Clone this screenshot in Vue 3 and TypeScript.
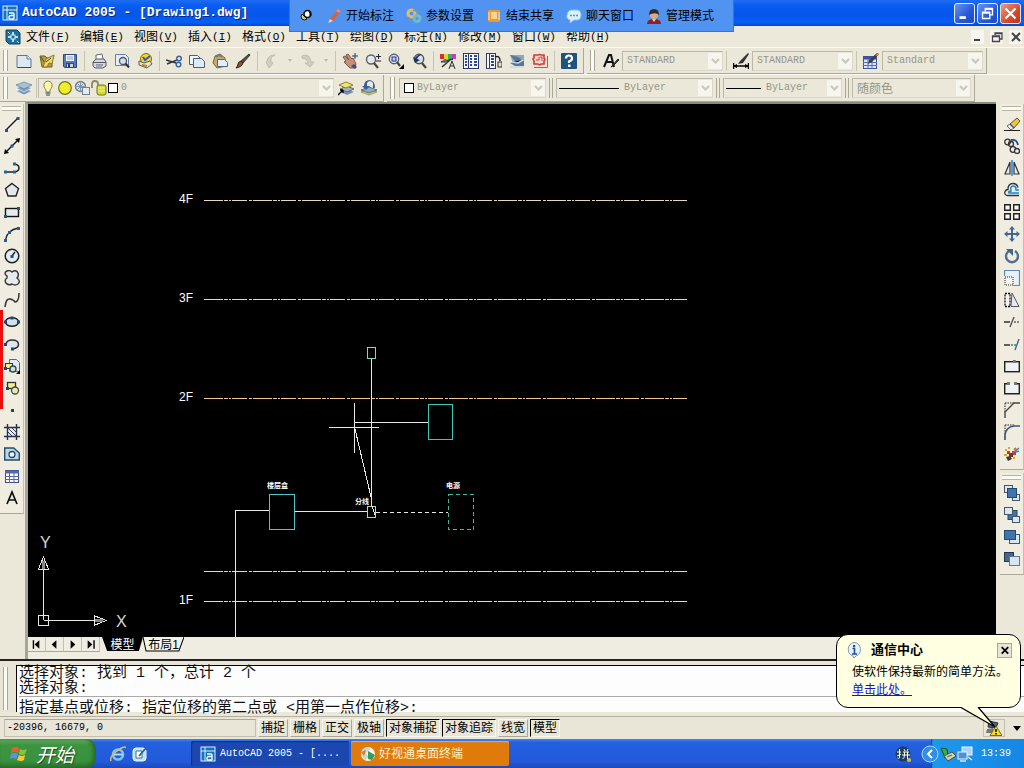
<script setup lang="ts">
import { ref } from 'vue'

type Item = { id: string; label: string }

const icons: Record<string, string> = {
  app: '<rect x="1" y="1" width="14" height="14" fill="#1573b8" stroke="#d8f0ff"/><path d="M1 5h14M5 1v14" stroke="#d8f0ff"/><path d="M7 8h4q1 0 1 1v5M12 10.500H9q-2 0-2 2t2 1.500h3" fill="none" stroke="#fff" stroke-width="1.300"/>',
  dwg: '<path d="M1 1h11l3 3v11H4l-3-3z" fill="#1c6f9f" stroke="#0c4468"/><path d="M8 3v10M3 8h10" stroke="#fff" stroke-width="1.500"/><rect x="6" y="6" width="4" height="4" fill="#1c6f9f" stroke="#c9efff"/><path d="M3 3l2 2M12 12l2 2" stroke="#bff"/>',
  new: '<path d="M1 2.500h10l4 3.500v8.500H1z" fill="#dce9f4" stroke="#5e7690"/><path d="M11 2.500V6h4" fill="#fff" stroke="#5e7690"/><path d="M2 14.500h13" stroke="#34485e"/>',
  open: '<path d="M1 3h5l2 2h5v9H3z" fill="#b99c3c" stroke="#6d5b22"/><path d="M4 14l3-8 8-4-2 9-3-1-2 4z" fill="#f0d76c" stroke="#8c7428"/><path d="M2 4l3 5M7 9l5-4" stroke="#45521b"/>',
  save: '<path d="M1.500 1.500h13v13h-12l-1-1z" fill="#5779b4" stroke="#2f4a80"/><rect x="4" y="2" width="8" height="6" fill="#eef3fa"/><path d="M5 4h6M5 6h6" stroke="#8ea3c4"/><rect x="4.500" y="10.500" width="7" height="4" fill="#c8d4e8" stroke="#2f4a80"/><rect x="6" y="11" width="2" height="3" fill="#243b68"/>',
  print: '<path d="M5 7V2l6-1 1 5" fill="#fff" stroke="#667"/><path d="M2 9l3-3h8l2 3v4l-3 2H4l-2-2z" fill="#d5d8dc" stroke="#555b66"/><path d="M2 9.500h13M5 12h7" stroke="#555b66"/><rect x="5" y="12" width="6" height="2" fill="#93a7cf"/>',
  preview: '<path d="M1.500 1.500h10l3 3v8h-13z" fill="#e7eefb" stroke="#6b7fae"/><circle cx="9" cy="8" r="3.500" fill="#d4e1f2" stroke="#4f5660" stroke-width="1.300"/><path d="M11.500 10.500l3.500 4" stroke="#333" stroke-width="2"/>',
  publish: '<circle cx="9" cy="6" r="5.500" fill="#f0d338" stroke="#806d16"/><path d="M6 4l2 3 5-4" stroke="#335fa9" stroke-width="2" fill="none"/><path d="M2 8l5 2 6-2 2 3-5 4-8-3z" fill="#e5e2d8" stroke="#5b5a52"/><path d="M5 12l5 1" stroke="#b09117" stroke-width="2"/>',
  cut: '<path d="M0 7l10 3M1 11l10-4" stroke="#30353b" stroke-width="1.500"/><circle cx="13" cy="5.500" r="2.300" fill="none" stroke="#3c659b" stroke-width="1.500"/><circle cx="12.500" cy="11.500" r="2.300" fill="none" stroke="#3c659b" stroke-width="1.500"/>',
  copy: '<path d="M.5 2.500h8l3 3v6H.5z" fill="#edf6fb" stroke="#4b5f73"/><path d="M4.500 5.500h8l3 3v6h-11z" fill="#dcebf5" stroke="#4b5f73"/>',
  paste: '<path d="M3 3l5-2 5 4 1 8-9 2-4-5z" fill="#c1ab70" stroke="#80662e"/><path d="M4 4l3-2 3 2" stroke="#778" fill="none" stroke-width="2"/><path d="M5.500 6.500h7l3 3v4h-10z" fill="#e2eff8" stroke="#4b6a85"/>',
  match: '<path d="M14 1l1 1-7 8-2-2z" fill="#55504a" stroke="#37322d"/><path d="M6 8l2 2q-1 4-7 5 2-2 2-4t3-3z" fill="#8a5236" stroke="#30221a"/>',
  undo: '<path d="M3 8q1-6 8-6-5 2-4 7l2 1-4 5-3-6z" fill="#d2cebf" stroke="#c0bcad"/>',
  redo: '<path d="M2 3q8-3 9 6h3l-4 5-5-4h3q0-4-6-5z" fill="#d2cebf" stroke="#c0bcad"/>',
  pan: '<path d="M1 4l2-1 4 4-3-5 2-1 4 5 1-1 3 6-1 4-5 0-6-6 2-1z" fill="#c98f7b" stroke="#7c5345"/><path d="M9 13l3-2 3 3-2 2z" fill="#3d4f8a"/><path d="M13 0v6M10 3h6" stroke="#213767"/>',
  zoomrt: '<circle cx="6" cy="6.500" r="4.500" fill="#e4e9e9" stroke="#5a6068" stroke-width="1.400"/><path d="M9 10l4 5" stroke="#4b4740" stroke-width="2.200"/><path d="M11 3.500h5M13.500 1v5M11 8h5" stroke="#223"/>',
  zoomwin: '<circle cx="6" cy="6" r="4.700" fill="#e4e9f2" stroke="#5a6068" stroke-width="1.400"/><rect x="4" y="4" width="4" height="4" fill="#bfc9ff" stroke="#28309a"/><path d="M9 9l3 4" stroke="#4b4740" stroke-width="2.200"/><path d="M16 11v5h-5z" fill="#000"/>',
  zoomprev: '<circle cx="8" cy="6" r="4.700" fill="#d7e1ea" stroke="#4a5361" stroke-width="1.400"/><path d="M11 10l4 5" stroke="#4b4740" stroke-width="2.200"/><path d="M14 3Q9 0 6 6l3 1-5 3-2-6 2 1q4-6 10-2" fill="#1d3465"/>',
  props: '<rect x="0" y="1" width="4" height="5" fill="#d62d2d"/><rect x="4" y="1" width="4" height="5" fill="#e4d333"/><rect x="8" y="1" width="4" height="5" fill="#32b541"/><rect x="12" y="1" width="4" height="5" fill="#ca39ca"/><path d="M1 9l12-3M2 14l8-7" stroke="#333" stroke-width="1.500"/><path d="M9 16l3-8 3 8M10 13h4" stroke="#29313b" fill="none"/><circle cx="5" cy="8" r="2" fill="#666"/>',
  center: '<rect x=".5" y=".5" width="15" height="15" fill="#f5f7ff" stroke="#2b3a68"/><path d="M5.500 0v16" stroke="#2b3a68"/><path d="M2 3h2M2 6h2M2 9h2M2 12h2M7 3h2M11 3h3M7 6h2M11 6h3M7 9h2M11 9h3M7 12h2M11 12h3" stroke="#31478c" stroke-width="2"/>',
  palette: '<rect x=".5" y=".5" width="9" height="15" fill="#f5f7ff" stroke="#2b3a68"/><path d="M3.500 0v16" stroke="#2b3a68"/><path d="M5 3h3M5 6h3M5 9h3M5 12h3" stroke="#31478c" stroke-width="2"/><path d="M9 4q5-2 5 4" fill="none" stroke="#222" stroke-width="1.500"/><rect x="12" y="9" width="4" height="5" fill="#ddd" stroke="#333"/>',
  sheet: '<path d="M1 2h14v5l-5 3H4z" fill="#8ca6bf"/><path d="M1 2l8 2 6 4v5H6l-5-3 6-1z" fill="#54779b"/><path d="M3 9l6 1 5-3M1 14h14" stroke="#cad9e4" stroke-width="1.500"/>',
  markup: '<path d="M2 14.500h13.500V3" fill="none" stroke="#777"/><path d="M2 2h4q2-1 3 0h3v3q2 2 0 3v3H9q-2 2-3 0H2V8Q0 6 2 5z" fill="#f7d7cd" stroke="#d33932" stroke-width="1.600"/><path d="M7 4v3H4M8 4h2v4" stroke="#d33932" fill="none"/>',
  help: '<rect x="0" y="0" width="16" height="16" rx="1" fill="#1f537e"/><path d="M5 5.500q0-3 3-3t3 3q0 2-3 3v1.500" fill="none" stroke="#fff" stroke-width="2.200"/><rect x="7" y="11.500" width="2.500" height="2.500" fill="#fff"/>',
  tstyle: '<path d="M1 14L6 2h2l3 12M3 9h6" fill="none" stroke="#111" stroke-width="2"/><path d="M15 6l1 1-6 6-2 1z" fill="#555" stroke="#222"/>',
  dstyle: '<path d="M0 13h16M.5 10v6M15.500 10v6" stroke="#000" stroke-width="1.500"/><path d="M0 13l4-2v4zM16 13l-4-2v4z"/><path d="M15 0l1 1-6 9-5 1 2-3z" fill="#333"/>',
  tbstyle: '<rect x=".5" y="3.500" width="13" height="12" fill="#dbe3ff" stroke="#3e539c"/><path d="M0 5h14" stroke="#3e539c" stroke-width="3"/><path d="M5 6v10M9 6v10M0 9.500h14M0 12.500h14" stroke="#5a70bb"/><path d="M14 0l2 1-7 8-4 2 1-4z" fill="#38414c"/><path d="M12 3l3-3 1 2z" fill="#e19b27"/>',
  layers: '<path d="M0 11l8-3 8 3-8 4z" fill="#7893b1" stroke="#fff" stroke-width=".6"/><path d="M0 8l8-3 8 3-8 4z" fill="#7fa0bd" stroke="#fff" stroke-width=".6"/><path d="M0 5l8-3 8 3-8 4z" fill="#a8c3d8" stroke="#54718e" stroke-width=".6"/>',
  bulb: '<path d="M6 10q-3-3-2-6 1-3 4-3 3 0 4 3 1 3-2 6v2H6z" fill="#fff9b0" stroke="#8c8550"/><path d="M5.500 13h5M6 15h4" stroke="#677" stroke-width="1.500"/>',
  sun: '<circle cx="8" cy="8" r="6.300" fill="#f1ee27" stroke="#737522" stroke-width="1.200"/>',
  freeze: '<circle cx="6.500" cy="6.500" r="5" fill="#d2e0e8" stroke="#6c8294" stroke-width="1.400"/><path d="M6.500 1v11M1 6.500h11M3 3l7 7M10 3l-7 7" stroke="#8098aa"/><rect x="8.500" y="7.500" width="7" height="7" fill="#e4eaf0" stroke="#6c8294"/>',
  lock: '<path d="M1 8V4q0-3 3-3t3 3v3" fill="none" stroke="#8b8b60" stroke-width="1.800"/><rect x="6" y="5" width="9" height="10" rx="2" fill="#d3d92d" stroke="#6f771c"/><path d="M7 8h7M7 11h7" stroke="#f4f69d"/>',
  mklayer: '<path d="M2 12l7-3 7 3-7 3z" fill="#7995ae"/><path d="M2 9l7-3 7 3-7 3z" fill="#9db4c4" stroke="#667"/><path d="M1 5l7-3 7 3-7 3z" fill="#f0e86d" stroke="#8b8435"/><path d="M0 15l5-5M5 10v3M5 10H2" stroke="#000" stroke-width="1.300"/>',
  prevlayer: '<path d="M0 12l8-3 8 3-8 3z" fill="#e0d86b" stroke="#997"/><path d="M0 10l8-3 8 3-8 3z" fill="#8eabc8" stroke="#577"/><path d="M12 8V3q-3-4-6 0v3h3L5 10 1 6h2q0-6 6-6 5 1 5 8z" fill="#3b5f9a"/>',
  line: '<path d="M2 14L14 2" stroke="#111" stroke-width="1.300"/><path d="M1 13h3v3H1zM12.500 1h3v3h-3z" fill="#245482"/>',
  xline: '<path d="M2 14L14 2" stroke="#111" stroke-width="1.500"/><path d="M0 16l1-5 4 4zM16 0l-1 5-4-4z"/><rect x="6.500" y="6.500" width="3" height="3" fill="#245c96"/>',
  pline: '<path d="M2 12h9q4-1 4-4t-4-4" fill="none" stroke="#222" stroke-width="1.500"/><path d="M0 10.500h3v3H0zM9 10.500h3v3H9zM9 2.500h3v3H9z" fill="#1c67a8"/>',
  polygon: '<path d="M8 1.500l6.500 5-2.500 7.500H4L1.500 6.500z" fill="#e3e8ec" stroke="#222" stroke-width="1.400"/>',
  rect: '<rect x="1.500" y="4.500" width="13" height="8" fill="#e4ebef" stroke="#111" stroke-width="1.400"/><path d="M0 11h3v3H0zM13 3h3v3h-3z" fill="#245482"/>',
  arc: '<path d="M1.500 14Q3 4 14.500 2" fill="none" stroke="#222" stroke-width="1.500"/><path d="M0 13h3v3H0zM4 5h3v3H4zM13 1h3v3h-3z" fill="#1e5fa2"/>',
  circle: '<circle cx="8" cy="8" r="6.800" fill="#dfecf6" stroke="#222" stroke-width="1.500"/><path d="M8 8l3-4" stroke="#222" stroke-width="1.400"/><rect x="6.500" y="7" width="3" height="3" fill="#1e4f82"/>',
  cloud: '<path d="M3 6Q-1 3 3 1q3-1 5 1 4-3 6 1 1 3-1 5 4 3 1 6-3 2-6 0-4 2-6-1-2-3 1-5z" fill="#e7ebee" stroke="#333" stroke-width="1.400"/>',
  spline: '<path d="M1 15Q2 6 6 7t5 3q4 0 4-9" fill="none" stroke="#333" stroke-width="1.500"/>',
  ellipse: '<ellipse cx="8" cy="8" rx="6.500" ry="4.300" fill="#cfe1ec" stroke="#222" stroke-width="1.500"/><path d="M0 6.500h3v3H0zM13 6.500h3v3h-3zM6.500 2.500h3v3h-3z" fill="#14497f"/>',
  earc: '<path d="M2 8Q3 4 8 4q6 0 6.500 4t-6 5" fill="#dde8ef" stroke="#333" stroke-width="1.500"/><path d="M0 7h3v3H0zM7 11.500h3v3H7z" fill="#14497f"/>',
  insblk: '<path d="M5.500 1.500h7l3 3v9h-10z" fill="#dfe9f1" stroke="#56687c"/><rect x="1.500" y="5.500" width="7" height="5" fill="#f4f08b" stroke="#333"/><circle cx="9" cy="11" r="3" fill="#d4e6c0" stroke="#224a6b" stroke-width="1.300"/><path d="M0 9h3v3H0z" fill="#14497f"/><path d="M16 12v4h-4z"/>',
  mkblk: '<rect x="3.500" y="2.500" width="8" height="6" fill="#f4f08b" stroke="#333" stroke-width="1.300"/><circle cx="11" cy="10.500" r="3.500" fill="#e3edb0" stroke="#444" stroke-width="1.300"/><path d="M2 7h3v3H2z" fill="#14497f"/>',
  point: '<rect x="7" y="7" width="3" height="3" fill="#174f2f"/>',
  hatch: '<rect x="3" y="3" width="10" height="10" fill="#eef"/><path d="M3.500 0v16M12.500 0v16M0 3.500h16M0 12.500h16" stroke="#234" stroke-width="1.400"/><path d="M4 8l5 5M4 4l9 9M8 4l5 5" stroke="#335"/>',
  region: '<path d="M.7 2h9l5.600 5v7H.7z" fill="#b9d9ea" stroke="#274b66" stroke-width="1.400"/><circle cx="8" cy="8.500" r="3" fill="#edf6fb" stroke="#274b66" stroke-width="1.300"/>',
  table: '<rect x="1.500" y="2.500" width="13" height="12" fill="#fff" stroke="#3d4c86"/><path d="M1 4h14" stroke="#5668a8" stroke-width="3"/><path d="M5.500 5v10M10 5v10M1 8.500h14M1 11.500h14" stroke="#5668a8"/>',
  mtext: '<path d="M3 14L8 2l5 12M4.800 10h6.400" fill="none" stroke="#111" stroke-width="1.700"/>',
  erase: '<path d="M0 14.500h16" stroke="#222"/><path d="M3 10l4 4 3-2-4-4z" fill="#f2e9e9" stroke="#8b5a5a"/><path d="M6 8l7-6 3 3-6 7z" fill="#eec646" stroke="#6c5414"/><path d="M6 8l4 4" stroke="#3a5a8a" stroke-width="1.500"/>',
  mcopy: '<circle cx="3.500" cy="4" r="2.800" fill="none" stroke="#333" stroke-width="1.300"/><circle cx="7" cy="6" r="2.500" fill="none" stroke="#333" stroke-width="1.300"/><circle cx="9" cy="11.500" r="2.800" fill="#eee" stroke="#333" stroke-width="1.300"/><circle cx="13" cy="13" r="2.500" fill="#eee" stroke="#333" stroke-width="1.300"/><path d="M7 2q6-1 7 5" fill="none" stroke="#1c4b88" stroke-width="1.800"/>',
  mirror: '<path d="M6 2v12H1zM10 2v12h5z" fill="#e5ebee" stroke="#333" stroke-width="1.200"/><path d="M8 0v16" stroke="#1787d3" stroke-width="1.500"/>',
  offset: '<path d="M15 13.500H3q-3-1-2-4 1-2 3-2 0-6 5-6 4 0 5 4" fill="none" stroke="#333" stroke-width="1.300"/><path d="M15 11H5q-1-2 2-2-1-5 2-5 3 0 3 3v1h3" fill="none" stroke="#1787d3" stroke-width="1.500"/>',
  array: '<path d="M.7.7h5.600v5.600H.7zM9.700.7h5.600v5.600H9.700zM.7 9.700h5.600v5.600H.7zM9.700 9.700h5.600v5.600H9.700z" fill="#f5f5f2" stroke="#222" stroke-width="1.400"/>',
  move: '<path d="M8 0l3 3.500H9V7h3.500V5L16 8l-3.500 3V9H9v3.500h2L8 16l-3-3.500h2V9H3.500v2L0 8l3.500-3v2H7V3.500H5z" fill="#3f6694"/>',
  rotate: '<path d="M11 3a6 6 0 1 1-6 0" fill="none" stroke="#52708e" stroke-width="2.400"/><path d="M2 1h7v7z" fill="#44658a"/>',
  scale: '<path d="M.5 6V.5h15v15H9" fill="#e7f0f6" stroke="#5b88b0" stroke-width="1.200"/><rect x="1" y="7" width="8" height="8" fill="#f4f4f0" stroke="#222" stroke-dasharray="1 1"/>',
  stretch: '<path d="M1 1.500h5v13H1z" fill="#f4f4f0" stroke="#111" stroke-dasharray="2 1" stroke-width="1.300"/><path d="M8 1l7 13.500H7z" fill="#e4eaf0" stroke="#556"/>',
  trim: '<path d="M0 8h6" stroke="#222" stroke-width="1.400"/><path d="M10 8h6" stroke="#222" stroke-dasharray="2 1"/><path d="M6 13l4-10" stroke="#555" stroke-width="1.400"/>',
  extend: '<path d="M0 9h6" stroke="#222" stroke-width="1.400"/><path d="M7 9h5" stroke="#298585" stroke-dasharray="2 1" stroke-width="1.400"/><path d="M11 14l4-11" stroke="#46658b" stroke-width="1.400"/>',
  breakpt: '<rect x=".7" y="3.700" width="14.600" height="10" fill="#eef2f4" stroke="#222" stroke-width="1.400"/><rect x="9" y="2" width="3" height="3" fill="#777"/>',
  break: '<path d="M4 3.700H.7v10h14.600v-10H12" fill="#eef2f4" stroke="#222" stroke-width="1.400"/><path d="M3 2h3v3H3zM10 2h3v3h-3z" fill="#777"/>',
  chamfer: '<path d="M1 1h9M1 1v9" stroke="#222" stroke-dasharray="1.500 1"/><path d="M1 16v-6l9-9h6" fill="none" stroke="#444" stroke-width="1.400"/>',
  fillet: '<path d="M1 1h9M1 1v9" stroke="#222" stroke-dasharray="1.500 1"/><path d="M1 16v-5Q2 3 10 2h6" fill="none" stroke="#3b5878" stroke-width="1.700"/>',
  explode: '<path d="M1 3h2v2H1zM4 1h2v2H4zM0 8h3v2H0zM9 11h2v2H9z" fill="#e0a52a"/><path d="M3 5h3v3H3zM8 5h4v4H8z" fill="#c73b25"/><path d="M5 7h4v4H5z" fill="#8a2d20"/><path d="M2 11l4-1 2 3-4 2z" fill="#4a3b30"/><path d="M9 7l6-5M12 6l3-1" stroke="#5182b6" stroke-width="1.500"/><path d="M10 4l2-2" stroke="#e7622e" stroke-width="2"/>',
  order1: '<rect x=".5" y=".5" width="8" height="7" fill="#dce7f0" stroke="#456"/><rect x="8.500" y="9.500" width="7" height="6" fill="#dce7f0" stroke="#456"/><rect x="3.500" y="3.500" width="9" height="9" fill="#3f74ac" stroke="#23486f"/>',
  order2: '<rect x="4" y="3.500" width="9" height="9" fill="#3f74ac" stroke="#23486f"/><rect x=".5" y=".5" width="8" height="7" fill="#dce7f0" stroke="#456"/><rect x="8.500" y="9.500" width="7" height="6" fill="#dce7f0" stroke="#456"/>',
  order3: '<rect x="5.500" y="5.500" width="10" height="9" fill="#d7e6f2" stroke="#456"/><rect x=".5" y="1.500" width="11" height="9" fill="#3f74ac" stroke="#23486f"/>',
  order4: '<rect x=".5" y="1.500" width="9" height="9" fill="#46668b" stroke="#23364f"/><rect x="5.500" y="5.500" width="10" height="9" fill="#d7e6f2" stroke="#678"/>',
  pin: '<path d="M4 6l5 5q-3 2-5 0t0-5z" fill="#d9d46a" stroke="#111"/><ellipse cx="9.500" cy="6" rx="3.500" ry="3.500" fill="#fff" stroke="#111" stroke-width="1.600"/><path d="M11 3q2 2 1 5" stroke="#111" stroke-width="1.500" fill="none"/>',
  pencil: '<path d="M12 1l3 2-8 10-3-2z" fill="#d9603d"/><path d="M4 11l3 2-5 2z" fill="#efd5a6"/><path d="M12 1l3 2-2 2-3-2z" fill="#e68c7a"/>',
  params: '<circle cx="5.500" cy="5.500" r="3.500" fill="none" stroke="#e6bd56" stroke-width="3"/><circle cx="11" cy="10.500" r="3" fill="none" stroke="#6fbad0" stroke-width="3"/><path d="M7 2l6 2M2 9l4 4" stroke="#7c95a2" stroke-width="1.500"/>',
  share: '<rect x="2" y="2" width="12" height="12" rx="1" fill="#ee9a2b"/><rect x="5" y="4" width="6" height="7" fill="#f6d59d"/><path d="M3 4v8M13 4v8" stroke="#fce8c7"/>',
  chat: '<path d="M2 4q1-2 4-2h5q4 0 4 5t-4 5H8l-4 3v-3Q0 11 1 7z" fill="#d9f1ff" stroke="#81c3f1"/><path d="M4 7.500h2M7 7.500h2M10 7.500h2" stroke="#4797d6" stroke-width="1.500"/>',
  user: '<path d="M1 16q0-5 7-5t7 5z" fill="#8d2130"/><circle cx="8" cy="7" r="4" fill="#dfaa7b"/><path d="M3 7Q3 1 8 1t5 6q-3-3-8-1z" fill="#302a2a"/><path d="M6 11h4l-2 3z" fill="#f4cc9f"/>',
  ie: '<circle cx="8" cy="8.500" r="5" fill="none" stroke="#7cc3fa" stroke-width="2.600"/><path d="M4 8.500h9" stroke="#a8d9ff" stroke-width="2"/><path d="M1 15Q-1 11 7 5t9-3" fill="none" stroke="#e0bd58" stroke-width="1.500"/>',
  desk: '<rect x="1" y="2" width="13" height="13" rx="3" fill="#bfe3f5" stroke="#e9f8ff"/><path d="M4 5h6v7H4z" fill="#fff" stroke="#35739f"/><path d="M7 10l7-8" stroke="#2b6290" stroke-width="1.800"/>',
  globe: '<circle cx="8" cy="8" r="7" fill="#f3f7ef"/><path d="M2 4q4-4 9-2L6 7l3 4-4 3q-4-3-3-10z" fill="#c9d9d2"/><path d="M8 5l7 4-3 5-4-1z" fill="#3a9c55"/><path d="M1 6l5-2-2 6z" fill="#e27a2c"/>',
  ime: '<circle cx="8" cy="8" r="7.500" fill="#1d3d58"/><path d="M4.500 3v9q-1 1-2 0M2 6h4M2 10l4-2M9 3l1 2M13 3l-1 2M8 6h6M7 9h8M9.500 6v3q0 3-2 4M12.500 6v7" fill="none" stroke="#fff"/><circle cx="14" cy="14" r="2" fill="#d7c03c"/>',
  tray1: '<path d="M1 2l6 1 1 7-3 2z" fill="#37af46" stroke="#104c26"/><path d="M4 10l8-4 4 4-8 5z" fill="#d5d3b0" stroke="#4d4e3a"/><path d="M7 11l5-2" stroke="#555"/>',
  tray2: '<rect x="5" y="1" width="10" height="8" fill="#a9d4f7" stroke="#e9f6ff"/><rect x="1" y="6" width="9" height="7" fill="#4e8fd8" stroke="#e9f6ff"/><path d="M3 15h6M11 11l4 3" stroke="#d9e5f0" stroke-width="1.500"/>',
  comm: '<path d="M3 1l9 2-2 5-8-1z" fill="#49688f" stroke="#233"/><path d="M1 9l6-1v5H0z" fill="#777"/><path d="M10 6l6 9.500H4z" fill="#f5d92d" stroke="#7d6b10"/><path d="M10 9v3M10 13v1.500" stroke="#000" stroke-width="1.500"/>',
  info: '<path d="M8 .5a7 7 0 0 1 2 13.500l-2 2-1-2A7 7 0 0 1 8 .5z" fill="#eaf2fb" stroke="#8398b5"/><path d="M6.500 6.500H8.500V12M6 12h5" fill="none" stroke="#1b4ea7" stroke-width="1.600"/><rect x="7" y="3" width="2.200" height="2.200" fill="#1b4ea7"/>',
}

const stdGroups: Item[][] = [
  [{ id: 'new', label: '新建' }, { id: 'open', label: '打开' }, { id: 'save', label: '保存' }],
  [{ id: 'print', label: '打印' }, { id: 'preview', label: '打印预览' }, { id: 'publish', label: '发布' }],
  [{ id: 'cut', label: '剪切' }, { id: 'copy', label: '复制' }, { id: 'paste', label: '粘贴' }, { id: 'match', label: '特性匹配' }],
  [{ id: 'undo', label: '放弃' }, { id: 'redo', label: '重做' }],
  [{ id: 'pan', label: '实时平移' }, { id: 'zoomrt', label: '实时缩放' }, { id: 'zoomwin', label: '窗口缩放' }, { id: 'zoomprev', label: '缩放上一个' }],
  [{ id: 'props', label: '特性' }, { id: 'center', label: '设计中心' }, { id: 'palette', label: '工具选项板' }, { id: 'sheet', label: '图纸集管理器' }, { id: 'markup', label: '标记集管理器' }],
  [{ id: 'help', label: '帮助' }],
]

const styleBoxes = [
  { id: 'tstyle', label: '文字样式', value: 'STANDARD' },
  { id: 'dstyle', label: '标注样式', value: 'STANDARD' },
  { id: 'tbstyle', label: '表格样式', value: 'Standard' },
]

const menus = [
  ['文件', 'F'], ['编辑', 'E'], ['视图', 'V'], ['插入', 'I'], ['格式', 'O'], ['工具', 'T'],
  ['绘图', 'D'], ['标注', 'N'], ['修改', 'M'], ['窗口', 'W'], ['帮助', 'H'],
]

const share: Item[] = [
  { id: 'pencil', label: '开始标注' }, { id: 'params', label: '参数设置' }, { id: 'share', label: '结束共享' },
  { id: 'chat', label: '聊天窗口' }, { id: 'user', label: '管理模式' },
]

const drawTools = ['line', 'xline', 'pline', 'polygon', 'rect', 'arc', 'circle', 'cloud', 'spline', 'ellipse', 'earc', 'insblk', 'mkblk', 'point', 'hatch', 'region', 'table', 'mtext']
const editTools = ['erase', 'mcopy', 'mirror', 'offset', 'array', 'move', 'rotate', 'scale', 'stretch', 'trim', 'extend', 'breakpt', 'break', 'chamfer', 'fillet', 'explode']
const orderTools = ['order1', 'order2', 'order3', 'order4']

const floors = [
  { y: 96, name: '4F' }, { y: 195, name: '3F' }, { y: 294, name: '2F' }, { y: 467, name: '' }, { y: 497, name: '1F' },
]

const toggles = ref([
  { label: '捕捉', on: false }, { label: '栅格', on: false }, { label: '正交', on: false }, { label: '极轴', on: false },
  { label: '对象捕捉', on: true }, { label: '对象追踪', on: true }, { label: '线宽', on: false }, { label: '模型', on: true },
])

const command = ref('指定基点或位移: 指定位移的第二点或 <用第一点作位移>:')
</script>

<template>
  <div class="desktop">
    <header class="titlebar">
      <svg class="icon" viewBox="0 0 16 16" v-html="icons.app"></svg>
      <h1>AutoCAD 2005 - [Drawing1.dwg]</h1>
      <div class="winbtns">
        <button aria-label="最小化"><svg viewBox="0 0 21 21"><path d="M5 15h7" stroke="#fff" stroke-width="3" /></svg></button>
        <button aria-label="还原"><svg viewBox="0 0 21 21"><path d="M8 8V5h8v7h-3M8 6h8M5 9h8v7H5zM5 10h8" fill="none" stroke="#fff" stroke-width="1.500" /></svg></button>
        <button class="close" aria-label="关闭"><svg viewBox="0 0 21 21"><path d="M5 5l11 11M16 5L5 16" stroke="#fff" stroke-width="2.500" /></svg></button>
      </div>
    </header>

    <nav class="menubar">
      <svg class="icon" viewBox="0 0 16 16" v-html="icons.dwg"></svg>
      <button v-for="m in menus" :key="m[0]" class="menu">{{ m[0] }}<span class="key">(<u>{{ m[1] }}</u>)</span></button>
      <div class="mdi">
        <button aria-label="最小化文档"><svg viewBox="0 0 12 12"><path d="M2 9h6" stroke="#444" stroke-width="2" /></svg></button>
        <button aria-label="还原文档"><svg viewBox="0 0 12 12"><path d="M4 4V2h7v6H9M4 2.500h7M1.500 5h7v5.500h-7zM1.500 5.500h7" fill="none" stroke="#444" stroke-width="1.300" /></svg></button>
        <button aria-label="关闭文档"><svg viewBox="0 0 12 12"><path d="M2 2l8 8M10 2l-8 8" stroke="#444" stroke-width="2" /></svg></button>
      </div>
    </nav>

    <div class="row">
      <div class="bar">
        <i class="grip"></i>
        <template v-for="(g, gi) in stdGroups" :key="gi">
          <i v-if="gi" class="sep"></i>
          <template v-for="t in g" :key="t.id">
            <button class="tool" :aria-label="t.label"><svg class="icon" viewBox="0 0 16 16" v-html="icons[t.id]"></svg></button>
            <button v-if="gi === 3" class="drop" :aria-label="t.label + '列表'"><svg viewBox="0 0 6 4"><path d="M1 0h4L3 3z" fill="#bdb9aa" /></svg></button>
          </template>
        </template>
      </div>
      <div class="bar">
        <i class="grip"></i>
        <template v-for="(s, i) in styleBoxes" :key="s.id">
          <i v-if="i" class="sep"></i>
          <button class="tool" :aria-label="s.label"><svg class="icon" viewBox="0 0 16 16" v-html="icons[s.id]"></svg></button>
          <div class="combo style-combo">
            <select disabled :aria-label="s.label"><option>{{ s.value }}</option></select>
            <span class="arrow"><svg viewBox="0 0 9 6"><path d="M1 1l3.500 3.500L8 1" /></svg></span>
          </div>
        </template>
      </div>
    </div>

    <div class="row second">
      <div class="bar">
        <i class="grip"></i>
        <button class="tool" aria-label="图层特性管理器"><svg class="icon" viewBox="0 0 16 16" v-html="icons.layers"></svg></button>
        <i class="sep slim"></i>
        <div class="combo layer-combo">
          <svg v-for="n in ['bulb', 'sun', 'freeze', 'lock']" :key="n" class="icon" viewBox="0 0 16 16" v-html="icons[n]"></svg>
          <i class="swatch"></i>
          <select disabled aria-label="图层"><option>0</option></select>
          <span class="arrow"><svg viewBox="0 0 9 6"><path d="M1 1l3.500 3.500L8 1" /></svg></span>
        </div>
        <button class="tool" aria-label="将对象的图层置为当前"><svg class="icon" viewBox="0 0 16 16" v-html="icons.mklayer"></svg></button>
        <button class="tool" aria-label="上一个图层"><svg class="icon" viewBox="0 0 16 16" v-html="icons.prevlayer"></svg></button>
      </div>
      <div class="bar">
        <i class="grip"></i>
        <div class="combo color-combo">
          <i class="swatch"></i>
          <select disabled aria-label="颜色"><option>ByLayer</option></select>
          <span class="arrow"><svg viewBox="0 0 9 6"><path d="M1 1l3.500 3.500L8 1" /></svg></span>
        </div>
        <i class="minigrip"></i>
        <div class="combo type-combo">
          <i class="stroke long"></i>
          <select disabled aria-label="线型"><option>ByLayer</option></select>
          <span class="arrow"><svg viewBox="0 0 9 6"><path d="M1 1l3.500 3.500L8 1" /></svg></span>
        </div>
        <i class="minigrip"></i>
        <div class="combo weight-combo">
          <i class="stroke"></i>
          <select disabled aria-label="线宽"><option>ByLayer</option></select>
          <span class="arrow"><svg viewBox="0 0 9 6"><path d="M1 1l3.500 3.500L8 1" /></svg></span>
        </div>
        <i class="minigrip"></i>
        <div class="combo plot-combo">
          <select class="han" disabled aria-label="打印样式"><option>随颜色</option></select>
          <span class="arrow"><svg viewBox="0 0 9 6"><path d="M1 1l3.500 3.500L8 1" /></svg></span>
        </div>
      </div>
    </div>

    <main class="work">
      <aside class="side left">
        <i class="recording"></i>
        <div class="vbar">
          <i class="hgrip"></i>
          <button v-for="t in drawTools" :key="t" class="vtool" :aria-label="t"><svg class="icon" viewBox="0 0 16 16" v-html="icons[t]"></svg></button>
        </div>
      </aside>

      <section class="doc">
        <svg class="canvas" role="img" aria-label="Drawing1">
          <g fill="none" stroke="#e8e8e8" shape-rendering="crispEdges">
            <line v-for="f in floors" :key="f.y" x1="176" x2="659" :y1="f.y + 0.5" :y2="f.y + 0.5" :stroke="f.name === '2F' ? '#f0c890' : f.name === '4F' ? '#e8d8c0' : '#dcdcd0'" stroke-dasharray="19 1 4 1 2 1 15 2 3 1" />
            <path d="M343.500 255v145M327 318.500h73M301 323.500h50M326.500 299v50M267 407.500h72M207.500 533V406.500H241" />
            <path d="M348 408.500h72" stroke-dasharray="4 3" />
            <rect x="339.500" y="243.500" width="8" height="11" stroke="#7fd6c8" />
            <rect x="400.500" y="300.500" width="24" height="35" stroke="#3cc8b8" />
            <rect x="241.500" y="390.500" width="25" height="35" stroke="#4cc8cc" />
            <rect x="339.500" y="402.500" width="8" height="11" stroke="#a8d8c8" />
            <rect x="420.500" y="390.500" width="25" height="35" stroke="#3cb898" stroke-dasharray="4 3" />
            <path d="M327 325l16 68M343 399l4 12" />
            <path d="M10.500 511.500h10v10h-10zM15.500 516V465M16 516.500h50M15.500 453l-5 12h10zM78 516.500l-12-5v10z" />
            <path d="M15.500 457v8M67 516.500h8" stroke="#888" stroke-width="3" />
          </g>
          <g class="floor">
            <text v-for="f in floors" :key="f.y" x="151" :y="f.y + 3">{{ f.name }}</text>
          </g>
          <g class="tag">
            <text x="239" y="384">楼层盒</text>
            <text x="327" y="400">分线</text>
            <text x="418" y="384">电源</text>
          </g>
          <g class="axis">
            <text x="12" y="444">Y</text>
            <text x="88" y="523">X</text>
          </g>
        </svg>
        <div class="tabs">
          <button aria-label="第一个"><svg viewBox="0 0 18 14"><path d="M5 3h1.500v9H5zM12 3v9L7 7.500z" /></svg></button>
          <button aria-label="上一个"><svg viewBox="0 0 18 14"><path d="M11 3v9L6 7.500z" /></svg></button>
          <button aria-label="下一个"><svg viewBox="0 0 18 14"><path d="M7 3v9l5-4.500z" /></svg></button>
          <button aria-label="最后一个"><svg viewBox="0 0 18 14"><path d="M6 3v9l5-4.500zM12 3h1.500v9H12z" /></svg></button>
          <button class="tab active"><svg viewBox="0 0 40 15" preserveAspectRatio="none"><path d="M0 0h40l-4 14H5z" /></svg><span>模型</span></button>
          <button class="tab"><svg viewBox="0 0 40 15" preserveAspectRatio="none"><path d="M0 0l3 14h32L40 0" fill="#f4f2e8" stroke="#000" /></svg><span>布局1</span></button>
        </div>
      </section>

      <aside class="side right">
        <div class="vbar">
          <i class="hgrip"></i>
          <button v-for="t in editTools" :key="t" class="vtool" :aria-label="t"><svg class="icon" viewBox="0 0 16 16" v-html="icons[t]"></svg></button>
        </div>
        <div class="vbar">
          <i class="hgrip"></i>
          <button v-for="t in orderTools" :key="t" class="vtool" :aria-label="t"><svg class="icon" viewBox="0 0 16 16" v-html="icons[t]"></svg></button>
        </div>
      </aside>
    </main>

    <section class="command">
      <i class="grip"></i>
      <div class="console">
        <p>选择对象: 找到 1 个，总计 2 个</p>
        <p>选择对象:</p>
        <input v-model="command" aria-label="命令行" />
      </div>
    </section>

    <footer class="status">
      <output class="coords">-20396, 16679, 0</output>
      <button v-for="t in toggles" :key="t.label" class="toggle" :class="{ on: t.on }" @click="t.on = !t.on">{{ t.label }}</button>
      <div class="statustray">
        <button class="comm" aria-label="通信中心"><svg class="icon" viewBox="0 0 16 16" v-html="icons.comm"></svg></button>
        <button class="more" aria-label="状态栏菜单"><svg viewBox="0 0 8 5"><path d="M0 0h8L4 5z" /></svg></button>
      </div>
    </footer>

    <nav class="taskbar">
      <button class="start">
        <svg viewBox="0 0 18 18"><path d="M2 3q3-2 7 0L8 8Q5 6 1 8z" fill="#e4602f" /><path d="M10 4q3 2 7 0l-2 5q-3 2-6 0z" fill="#87c440" /><path d="M1 9q3-2 7 0l-2 5q-3-2-6 0z" fill="#5a94e8" /><path d="M9 10q3 2 6 0l-1 5q-3 2-7 0z" fill="#f3cb35" /></svg>
        <span>开始</span>
      </button>
      <div class="quick">
        <button aria-label="Internet Explorer"><svg class="icon" viewBox="0 0 16 16" v-html="icons.ie"></svg></button>
        <button aria-label="显示桌面"><svg class="icon" viewBox="0 0 16 16" v-html="icons.desk"></svg></button>
      </div>
      <button class="task current"><svg class="icon" viewBox="0 0 16 16" v-html="icons.app"></svg><span class="mono">AutoCAD 2005 - [....</span></button>
      <button class="task alert"><svg class="icon" viewBox="0 0 16 16" v-html="icons.globe"></svg><span>好视通桌面终端</span></button>
      <button class="ime" aria-label="拼音输入法"><svg class="icon" viewBox="0 0 16 16" v-html="icons.ime"></svg></button>
      <div class="tray">
        <button class="expand" aria-label="显示隐藏的图标"><svg viewBox="0 0 18 18"><circle cx="9" cy="9" r="8" fill="#2f8fe8" stroke="#a6dcff" /><path d="M11 5L7 9l4 4" fill="none" stroke="#fff" stroke-width="2" /></svg></button>
        <svg class="icon" viewBox="0 0 16 16" v-html="icons.tray1"></svg>
        <svg class="icon" viewBox="0 0 16 16" v-html="icons.tray2"></svg>
        <time class="mono">13:39</time>
      </div>
    </nav>

    <div class="sharebar">
      <button aria-label="固定"><svg class="icon" viewBox="0 0 16 16" v-html="icons.pin"></svg></button>
      <button v-for="s in share" :key="s.id"><svg class="icon" viewBox="0 0 16 16" v-html="icons[s.id]"></svg>{{ s.label }}</button>
    </div>

    <div class="balloon" role="status">
      <div class="head">
        <svg class="icon" viewBox="0 0 16 16" v-html="icons.info"></svg>
        <strong>通信中心</strong>
        <button aria-label="关闭"><svg viewBox="0 0 14 14"><path d="M4 4l7 7M11 4l-7 7" stroke="#000" stroke-width="2" /></svg></button>
      </div>
      <p>使软件保持最新的简单方法。</p>
      <a href="#">单击此处。</a>
      <svg class="tail" viewBox="0 0 40 22"><path d="M1 0l35 20L19 0" fill="#ffffe1" stroke="#000" stroke-width="1.300" /></svg>
    </div>
  </div>
</template>

<style>
body {
  margin: 0;
  background: #ece9d8;
}
</style>

<style scoped>
.desktop {
  position: relative;
  display: flex;
  flex-direction: column;
  min-height: 100vh;
  overflow: hidden;
  background: #ebe8d9;
  color: #000;
  font: 12px/16px "Liberation Sans", "Noto Sans CJK SC", sans-serif;
}
button,
select,
input {
  margin: 0;
  padding: 0;
  border: 0;
  border-radius: 0;
  background: none;
  color: inherit;
  font: inherit;
  appearance: none;
}
button {
  display: flex;
  align-items: center;
  justify-content: center;
  white-space: nowrap;
}
p {
  margin: 0;
}
.icon {
  flex: none;
  display: block;
  width: 16px;
  height: 16px;
}
.mono {
  font-family: "Liberation Mono", monospace;
  font-size: 10px;
}

.titlebar {
  display: flex;
  align-items: center;
  height: 26px;
  padding: 0 3px 0 2px;
  background: linear-gradient(#1f6df2 0, #0a5df0 20%, #0556ea 60%, #0560f8 85%, #0346c8 100%);
}
.titlebar h1 {
  flex: 1;
  margin: 0 0 0 4px;
  color: #fff;
  font: bold 13px/20px "Liberation Mono", monospace;
  text-shadow: 1px 1px #0a2a80;
}
.winbtns {
  display: flex;
  gap: 2px;
}
.winbtns button {
  width: 21px;
  height: 21px;
  border: 1px solid #e4edff;
  border-radius: 3px;
  background: linear-gradient(135deg, #6c94f0, #2558d8 60%, #1b4ac4);
}
.winbtns .close {
  background: linear-gradient(135deg, #f09a80, #d8492a 60%, #b83418);
}
.winbtns svg {
  width: 19px;
  height: 19px;
}

.menubar {
  display: flex;
  align-items: center;
  height: 21px;
  padding: 0 2px 0 5px;
  background: #ece9da;
}
.menu {
  justify-content: flex-start;
  width: 54px;
}
.menubar .icon + .menu {
  margin-left: 5px;
}
.key {
  font-family: "Liberation Mono", monospace;
  font-size: 11px;
}
.mdi {
  display: flex;
  gap: 6px;
  margin-left: auto;
}
.mdi button {
  width: 13px;
  height: 14px;
  background: #f6f5ef;
}
.mdi svg {
  width: 12px;
  height: 12px;
}

.row {
  display: flex;
  gap: 3px;
  height: 26px;
  border-top: 1px solid #fbfaf4;
}
.bar {
  display: flex;
  align-items: center;
  padding-right: 3px;
  border-right: 1px solid #aca899;
  border-bottom: 1px solid #aca899;
  background: #ebe8d9;
}
.grip {
  flex: none;
  align-self: stretch;
  box-sizing: border-box;
  width: 5px;
  margin: 2px 4px 2px 3px;
  border-left: 1px solid #aaa798;
  border-right: 1px solid #aaa798;
  background: #fbfaf4;
}
.minigrip {
  flex: none;
  align-self: stretch;
  width: 2px;
  margin: 3px 3px;
  border-left: 1px solid #aaa798;
  border-right: 1px solid #aaa798;
}
.tool {
  width: 23px;
  height: 24px;
}
.drop {
  width: 13px;
}
.drop svg {
  width: 6px;
  height: 4px;
}
.sep {
  flex: none;
  width: 1px;
  height: 20px;
  margin: 0 2px 0 3px;
  background: #c8c4b4;
}
.sep.slim {
  margin: 0 1px;
}
.combo {
  display: flex;
  align-items: center;
  gap: 1px;
  box-sizing: border-box;
  height: 20px;
  padding-left: 4px;
  border: 1px solid #dcd8c8;
  border-top-color: #bcb8a8;
  border-left-color: #bcb8a8;
}
.combo select {
  flex: 1;
  min-width: 0;
  color: #989485;
  opacity: 1;
  font: 10px/16px "Liberation Mono", monospace;
}
.combo select.han {
  font: 12px/16px "Noto Sans CJK SC", sans-serif;
}
.arrow {
  display: flex;
  align-items: center;
  justify-content: center;
  width: 14px;
  height: 16px;
  background: #f6f5ee;
}
.arrow svg {
  width: 9px;
  height: 6px;
  fill: none;
  stroke: #c9c7ba;
  stroke-width: 2;
}
.style-combo {
  width: 101px;
}
.layer-combo {
  width: 296px;
  padding-left: 1px;
}
.color-combo {
  width: 147px;
}
.type-combo {
  width: 157px;
  padding-left: 2px;
}
.weight-combo {
  width: 119px;
  padding-left: 2px;
}
.plot-combo {
  width: 119px;
  padding-left: 4px;
}
.swatch {
  flex: none;
  box-sizing: border-box;
  width: 10px;
  height: 10px;
  margin-right: 2px;
  border: 1px solid #000;
  background: #fff;
}
.stroke {
  flex: none;
  width: 35px;
  height: 1px;
  margin-right: 4px;
  background: #000;
}
.stroke.long {
  width: 60px;
}
.second {
  height: 27px;
}

.work {
  display: flex;
  flex: 1;
}
.side {
  position: relative;
  flex: none;
  display: flex;
  flex-direction: column;
  gap: 3px;
  width: 25px;
  padding-top: 2px;
}
.side.right {
  align-items: flex-end;
  width: 28px;
}
.vbar {
  display: flex;
  flex-direction: column;
  align-items: center;
  width: 24px;
  padding-bottom: 4px;
  box-sizing: border-box;
  border-right: 1px solid #c4c0b0;
  border-bottom: 1px solid #aca899;
  background: #f0ede0;
}
.hgrip {
  width: 19px;
  height: 3px;
  margin: 2px 0;
  border-top: 1px solid #b8b4a4;
  border-bottom: 1px solid #b8b4a4;
  background: #fbfaf4;
}
.vtool {
  width: 22px;
  height: 22px;
}
.recording {
  position: absolute;
  z-index: 1;
  top: 208px;
  left: 0;
  width: 3px;
  height: 99px;
  background: #ee0d0d;
}
.doc {
  flex: 1;
  display: flex;
  flex-direction: column;
  min-width: 0;
  border-top: 2px solid #8c897c;
  border-left: 3px solid #a8a598;
}
.canvas {
  flex: 1;
  display: block;
  width: 100%;
  min-height: 0;
  background: #000;
}
.floor text {
  fill: #fff;
  font: 12px "Liberation Sans Narrow", "Liberation Sans", sans-serif;
}
.tag text {
  fill: #fff;
  font: bold 7px "Noto Sans CJK SC", sans-serif;
}
.axis text {
  fill: #d8d8d8;
  font: 16px "Liberation Sans", sans-serif;
}
.tabs {
  display: flex;
  align-items: flex-start;
  height: 22px;
  background: #efede1;
}
.tabs button {
  width: 18px;
  height: 15px;
  border-right: 1px solid #c4c0b0;
  border-bottom: 1px solid #aca899;
}
.tabs button > svg {
  width: 18px;
  height: 14px;
}
.tabs .tab {
  position: relative;
  width: 41px;
  border: 0;
}
.tabs .tab > svg {
  position: absolute;
  inset: 0;
  width: 100%;
  height: 15px;
}
.tabs .tab.active {
  margin-left: 2px;
  color: #fff;
}
.tab span {
  position: relative;
}

.command {
  display: flex;
  padding-top: 4px;
  border-top: 2px solid #222;
  background: #e8e5d6;
}
.console {
  flex: 1;
  height: 46px;
  margin-left: 4px;
  padding-left: 2px;
  border-top: 1px solid #000;
  border-left: 1px solid #000;
  background: #fdfdfd;
  font: 15px/15px "Liberation Mono", "Noto Sans CJK SC", monospace;
  color: #111;
}
.console p {
  height: 15px;
  white-space: pre;
}
.console input {
  display: block;
  width: 100%;
  height: 17px;
  border-top: 1px solid #aaa;
}

.status {
  display: flex;
  align-items: center;
  height: 22px;
  margin-top: 4px;
  padding-left: 4px;
  border-top: 1px solid #b4b09f;
  background: #e9e6d7;
}
.coords {
  box-sizing: border-box;
  width: 252px;
  height: 18px;
  padding-left: 2px;
  border: 1px solid #c4c0b0;
  border-top-color: #aaa798;
  font: 10px/16px "Liberation Mono", monospace;
}
.toggle {
  height: 18px;
  padding: 0 2px;
  margin-left: 2px;
  border: 1px solid #f8f7f0;
  border-right-color: #aaa798;
  border-bottom-color: #aaa798;
}
.toggle.on {
  border-color: #000 #f8f7f0 #f8f7f0 #000;
}
.statustray {
  display: flex;
  align-items: center;
  gap: 8px;
  margin-left: auto;
  padding-right: 3px;
}
.comm {
  width: 22px;
  height: 18px;
  border: 1px solid #c4c0b0;
}
.more svg {
  width: 8px;
  height: 5px;
}

.taskbar {
  display: flex;
  align-items: stretch;
  height: 29px;
  color: #fff;
  background: linear-gradient(#3c86f4 0, #2460de 12%, #225ad8 80%, #1a48b8 100%);
}
.start {
  width: 96px;
  justify-content: flex-start;
  padding-left: 10px;
  gap: 8px;
  border-radius: 0 9px 9px 0;
  background: linear-gradient(#6cb86c 0, #3c9440 20%, #3a923e 75%, #2a702c 100%);
  box-shadow: inset -3px 0 4px #286828;
}
.start svg {
  width: 18px;
  height: 18px;
}
.start span {
  font: italic 19px/24px "Noto Sans CJK SC", sans-serif;
  text-shadow: 1px 1px 1px #1c4a1c;
}
.quick {
  display: flex;
  align-items: center;
  width: 95px;
}
.quick button {
  width: 22px;
}
.quick button:first-child {
  margin-left: 11px;
}
.task {
  justify-content: flex-start;
  gap: 4px;
  width: 158px;
  margin: 2px 2px 2px 0;
  padding-left: 9px;
  box-sizing: border-box;
  border-radius: 2px;
}
.current {
  background: #1c47ae;
  box-shadow: inset 1px 1px 1px #12307c;
}
.alert {
  gap: 3px;
  background: #e07a0c;
  color: #fff2c8;
  box-shadow: inset 0 1px 1px #f0a860;
}
.ime {
  width: 20px;
  margin-left: auto;
  margin-right: 8px;
}
.tray {
  display: flex;
  align-items: center;
  gap: 1px;
  padding-right: 13px;
  background: linear-gradient(90deg, transparent 10px, #0c3fa8 10px, #1d98ec 12px, #1686e4 100%);
}
.expand svg {
  width: 18px;
  height: 18px;
}
.tray time {
  margin-left: 7px;
}

.sharebar {
  position: absolute;
  top: 0;
  left: 289px;
  display: flex;
  align-items: center;
  gap: 12px;
  height: 31px;
  padding: 0 19px 0 8px;
  border: 1px solid #3a70d8;
  border-top: 0;
  background: #5193f0;
}
.sharebar button {
  gap: 4px;
}

.balloon {
  position: absolute;
  right: 3px;
  bottom: 60px;
  width: 183px;
  height: 72px;
  border: 1px solid #000;
  border-radius: 12px;
  background: #ffffe1;
}
.balloon .head {
  display: flex;
  align-items: center;
  gap: 9px;
  padding: 7px 8px 0 9px;
}
.head strong {
  flex: 1;
  font-size: 13px;
}
.head button {
  width: 15px;
  height: 15px;
  border: 1px solid #aaa798;
  background: #e8e5d6;
}
.head button svg {
  width: 14px;
  height: 14px;
}
.balloon p {
  margin: 6px 0 2px 15px;
  white-space: nowrap;
}
.balloon a {
  display: block;
  margin-left: 15px;
  color: #1a14c8;
}
.tail {
  position: absolute;
  top: 72px;
  left: 122px;
  width: 40px;
  height: 22px;
}
</style>
